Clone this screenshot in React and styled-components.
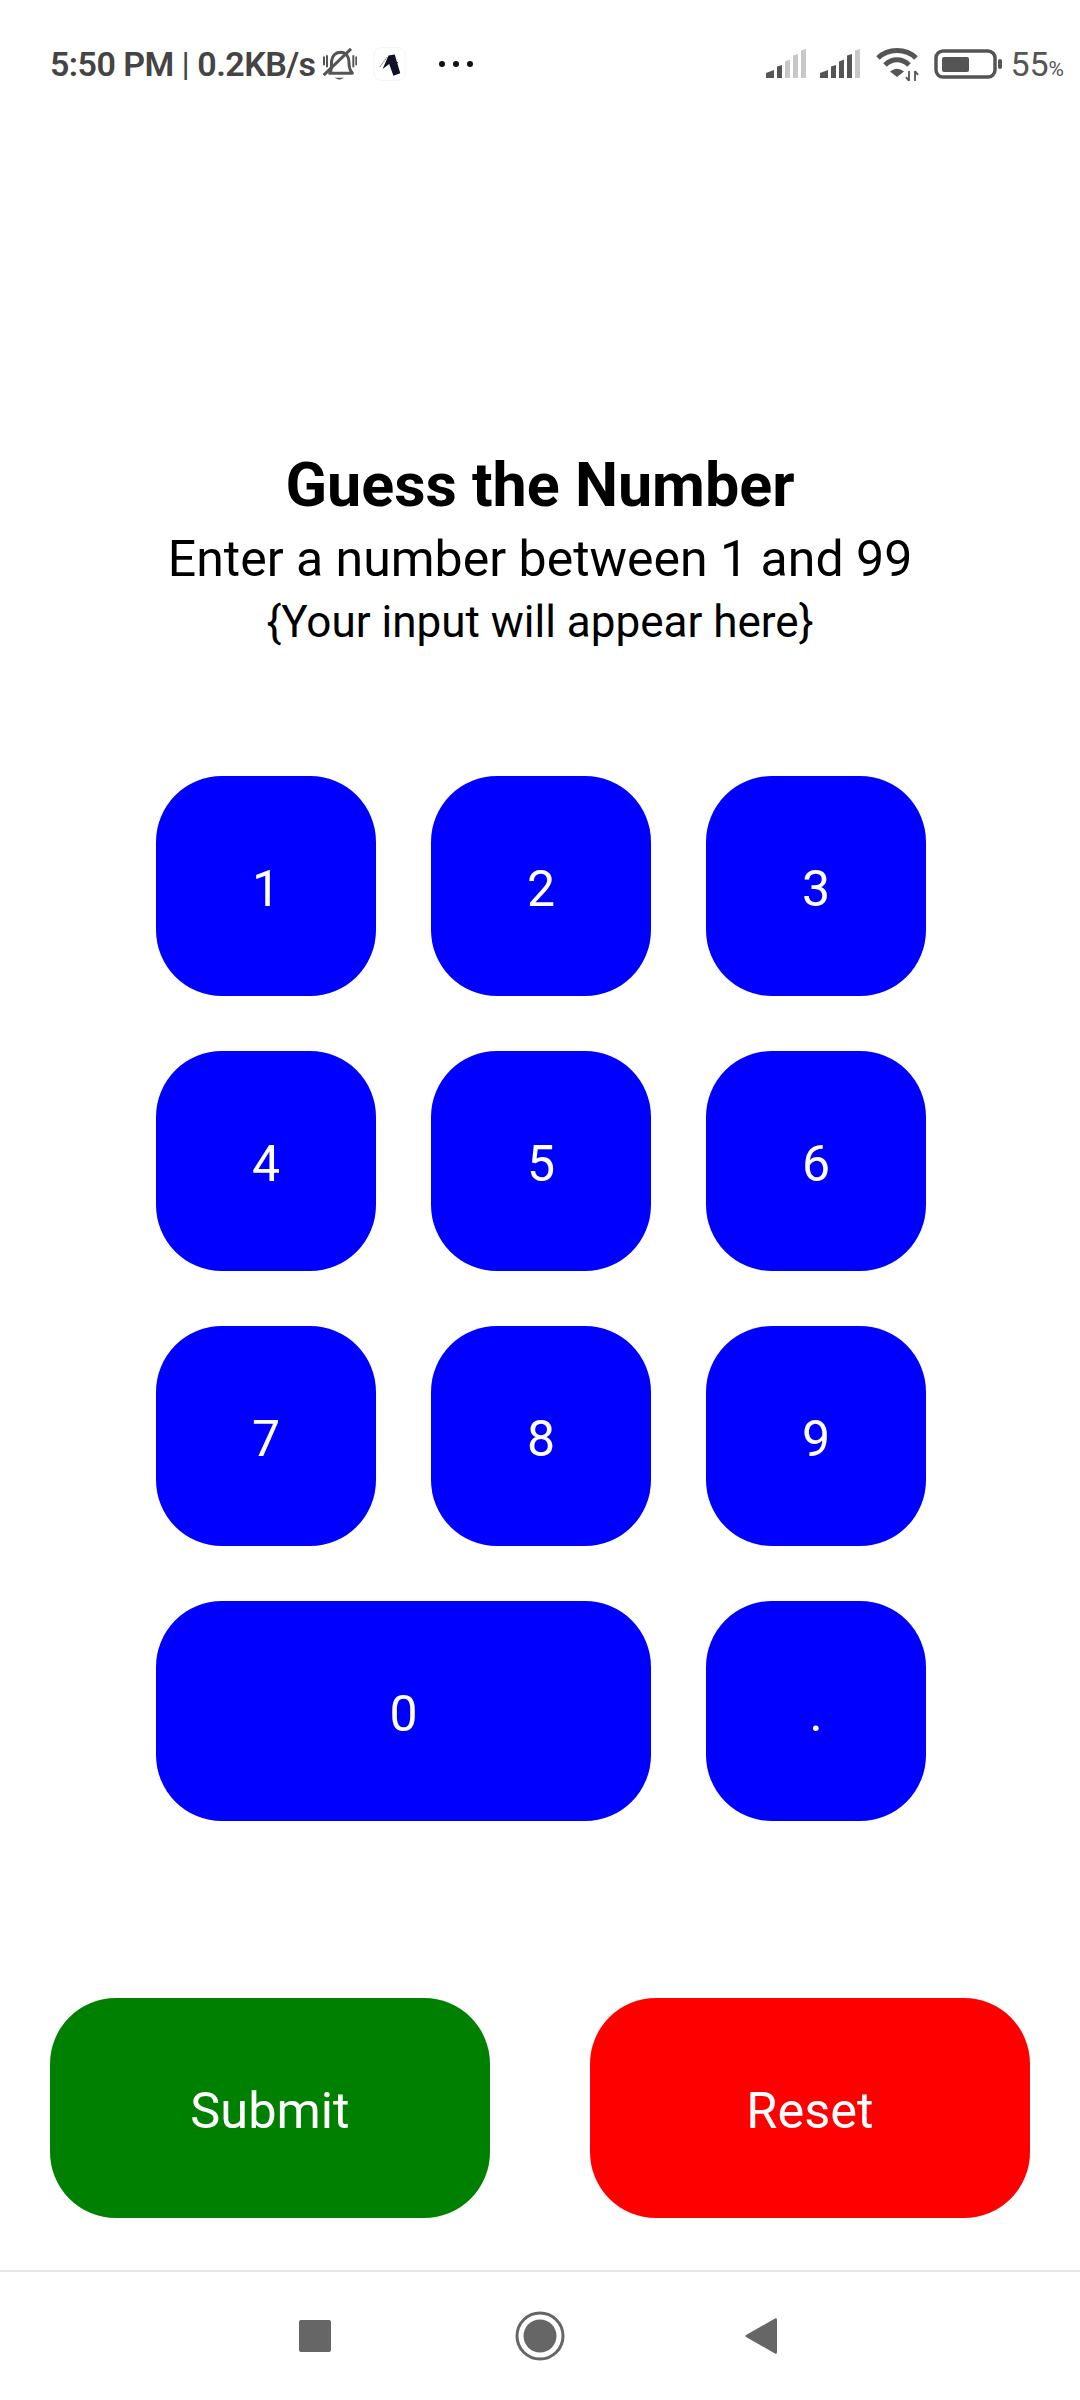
import React from "react";
import styled, { createGlobalStyle } from "styled-components";

const Global = createGlobalStyle`
  html, body { margin: 0; padding: 0; background: #fff; }
  body { font-family: Roboto, "Liberation Sans", sans-serif; }
`;
const Page = styled.div`
  width: 1080px; height: 2400px; display: flex; flex-direction: column; background: #fff; overflow: hidden;
`;
const StatusBar = styled.header`
  height: 128px; display: flex; align-items: center; justify-content: space-between;
  padding: 0 16px 0 50px; color: #444; box-sizing: border-box;
`;
const StatusGroup = styled.div`
  display: flex; align-items: center;
`;
const Clock = styled.span`
  font-size: 34px; font-weight: 600; white-space: nowrap; letter-spacing: -0.55px;
`;
const Pipe = styled.span`
  font-weight: 400;
`;
const Percent = styled.span`
  font-size: 34px; color: #555; white-space: nowrap; margin-left: 8px;
  small { font-size: 21px; }
`;
const Header = styled.section`
  margin-top: 318px; display: flex; flex-direction: column; align-items: center; color: #000;
`;
const Title = styled.h1`
  margin: 0; font-size: 61px; line-height: 78px; font-weight: 700;
`;
const Subtitle = styled.p`
  margin: 0; font-size: 50px; line-height: 70px;
`;
const Echo = styled.p`
  margin: 0; font-size: 44px; line-height: 56px;
`;
const Keypad = styled.section`
  margin: 126px 0 0 156px; display: grid;
  grid-template-columns: repeat(3, 220px); grid-auto-rows: 220px; gap: 55px;
`;
const Key = styled.button`
  border: 0; padding: 5px 0 0; background: #00f; color: #fff; border-radius: 66px;
  font-family: inherit; font-size: 50px;
  grid-column: ${p => (p.$wide ? "span 2" : "auto")};
`;
const Actions = styled.section`
  margin-top: 177px; padding: 0 50px; display: flex; justify-content: space-between;
`;
const Action = styled.button`
  width: 440px; height: 220px; border: 0; border-radius: 66px; padding: 5px 0 0;
  background: ${p => p.$bg}; color: #fff; font-family: inherit; font-size: 50.5px;
`;
const NavBar = styled.nav`
  margin-top: auto; height: 130px; box-sizing: border-box; border-top: 2px solid #e6e6e6;
  padding-right: 4px;
  display: flex; align-items: center; justify-content: center; gap: 180px;
`;

const Bell = () => (
  <svg width="34" height="32" viewBox="28 25 102 95" style={{ marginLeft: 8 }} fill="none" stroke="#555" strokeWidth="9">
    <path d="M48 100C56 90 52 75 54 62 57 45 68 37 82 37 98 38 106 52 106 68 106 82 108 92 116 100Z" strokeLinejoin="round" />
    <path d="M112 27 30 106" />
    <path d="M62 114H92L77 120Z" fill="#555" stroke="none" />
    <path d="M31 50V76M40 46V82" strokeWidth="6" />
    <path d="M119 46V82M128 50V76" strokeWidth="6" />
  </svg>
);
const Figure = () => (
  <svg width="33" height="34" viewBox="178 20 100 104" style={{ marginLeft: 16 }}>
    <rect x="180" y="22" width="96" height="100" rx="22" fill="none" stroke="#f4f4f4" strokeWidth="3" />
    <path d="M225 46 244 43 261 100 240 108 227 72 207 87 218 62Z" fill="#101028" />
    <path d="M199 80 220 52M244 62 256 70" fill="none" stroke="#333" strokeWidth="3" strokeDasharray="4 4" />
  </svg>
);
const Dots = () => (
  <svg width="36" height="8" viewBox="0 0 36 8" style={{ marginLeft: 32 }} fill="#111">
    <circle cx="4" cy="4" r="3" /><circle cx="18" cy="4" r="3" /><circle cx="32" cy="4" r="3" />
  </svg>
);
const SignalBars = [
  "M0 29V24L8 21V29Z",
  "M11 29V17.500L16 16V29Z",
  "M19 29V12.500L24 10.500V29Z",
  "M27 29V6.500L32 5V29Z",
  "M35 29V1.500L40 0V29Z",
];
const Signal = ({ on, ml }) => (
  <svg width="40" height="30" viewBox="0 0 40 30" style={{ marginLeft: ml }}>
    {SignalBars.map((d, i) => <path key={d} d={d} fill={i < on ? "#555" : "#c8c8c8"} />)}
  </svg>
);
const Wifi = () => (
  <svg width="44" height="34" viewBox="0 0 44 34" style={{ marginLeft: 16 }} fill="none" stroke="#555" strokeWidth="5">
    <path d="M2 11C12 1 30 1 40 11" />
    <path d="M9 18C16 11 26 11 33 18" />
    <path d="M21 30 14 24.500Q21 19 28 24.500Z" fill="#555" stroke="none" />
    <path d="M33 24V34M30 30L33 34" strokeWidth="1.800" />
    <path d="M39 34V24M39 24L42 28" strokeWidth="1.800" />
  </svg>
);
const Battery = () => (
  <svg width="68" height="30" viewBox="0 0 68 30" style={{ marginLeft: 14 }}>
    <rect x="2" y="2" width="59" height="26" rx="7" fill="none" stroke="#555" strokeWidth="3.500" />
    <rect x="8" y="8" width="27" height="15" rx="2" fill="#555" />
    <rect x="64" y="10" width="4" height="10" rx="2" fill="#555" />
  </svg>
);
const Recents = () => (
  <svg width="32" height="32" viewBox="0 0 32 32" style={{ marginRight: 4 }}><rect width="32" height="32" rx="2" fill="#666" /></svg>
);
const Home = () => (
  <svg width="50" height="50" viewBox="0 0 50 50">
    <circle cx="25" cy="25" r="23" fill="none" stroke="#666" strokeWidth="3" />
    <circle cx="25" cy="25" r="16.500" fill="#666" />
  </svg>
);
const Back = () => (
  <svg width="32" height="38" viewBox="0 0 32 38">
    <path d="M30 1.500Q32 .5 32 3V35Q32 37.500 30 36.500L1 20Q0 19 1 18Z" fill="#666" />
  </svg>
);

export default function App() {
  const keys = ["1", "2", "3", "4", "5", "6", "7", "8", "9"];
  return (
    <Page>
      <Global />
      <StatusBar>
        <StatusGroup>
          <Clock>5:50 PM <Pipe>|</Pipe> 0.2KB/s</Clock>
          <Bell /><Figure /><Dots />
        </StatusGroup>
        <StatusGroup>
          <Signal on={2} ml={0} /><Signal on={4} ml={14} /><Wifi /><Battery />
          <Percent>55<small>%</small></Percent>
        </StatusGroup>
      </StatusBar>
      <Header>
        <Title>Guess the Number</Title>
        <Subtitle>Enter a number between 1 and 99</Subtitle>
        <Echo>{"{Your input will appear here}"}</Echo>
      </Header>
      <Keypad>
        {keys.map(k => <Key key={k}>{k}</Key>)}
        <Key $wide>0</Key>
        <Key>.</Key>
      </Keypad>
      <Actions>
        <Action $bg="#008000">Submit</Action>
        <Action $bg="#f00">Reset</Action>
      </Actions>
      <NavBar>
        <Recents /><Home /><Back />
      </NavBar>
    </Page>
  );
}
